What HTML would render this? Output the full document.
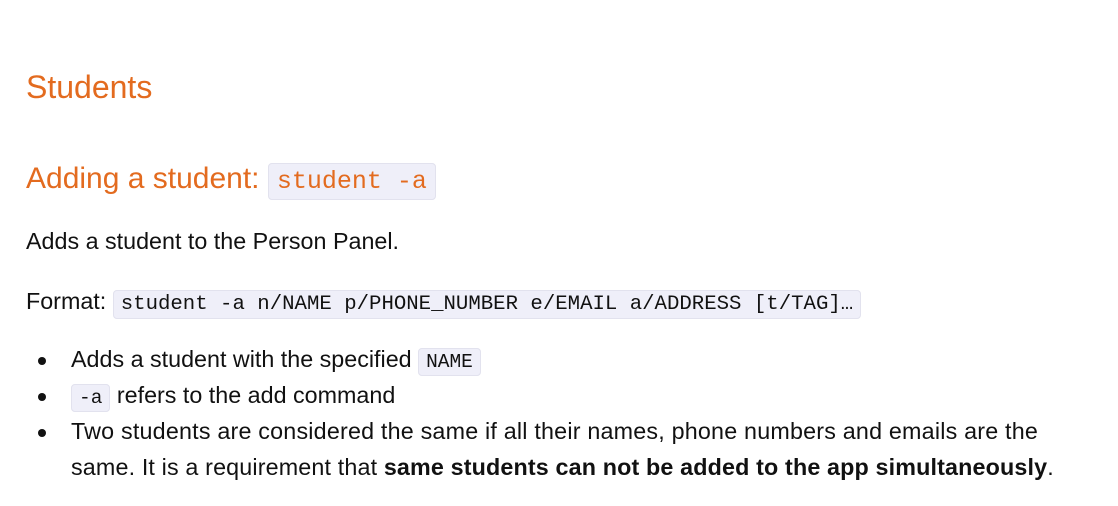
<!DOCTYPE html>
<html><head><meta charset="utf-8"><style>
body{margin:0;width:1118px;height:506px;background:#fff;font-family:"Liberation Sans",sans-serif;color:#111;position:relative;overflow:hidden}
.l{position:absolute;white-space:nowrap;left:26px}
.o{color:#e36b1f}
code{font-family:"Liberation Mono",monospace;background:#efeff9;border:1px solid #e2e2ee;border-radius:4px;padding:2px 7px;color:#111}
.b{position:absolute;left:38px;width:8px;height:8px;border-radius:50%;background:#111}
.t{font-size:23.3px}
</style></head><body>
<div class="l o" style="top:69px;font-size:32px">Students</div>
<div class="l o" style="top:162px;font-size:30px">Adding a student: <code style="color:#e36b1f;font-size:25px;padding:3px 8px">student -a</code></div>
<div class="l t" style="top:228px">Adds a student to the Person Panel.</div>
<div class="l t" style="top:288px">Format: <code style="font-size:20.7px">student -a n/NAME p/PHONE_NUMBER e/EMAIL a/ADDRESS [t/TAG]…</code></div>
<div class="b" style="top:357px"></div>
<div class="l t" style="left:71px;top:346px">Adds a student with the specified <code style="font-size:19.5px">NAME</code></div>
<div class="b" style="top:393px"></div>
<div class="l t" style="left:71px;top:382px"><code style="font-size:19.5px">-a</code> refers to the add command</div>
<div class="b" style="top:429px"></div>
<div class="l t" style="left:71px;top:418px;letter-spacing:0.2px">Two students are considered the same if all their names, phone numbers and emails are the</div>
<div class="l t" style="left:71px;top:454px;letter-spacing:0.15px">same. It is a requirement that <b>same students can not be added to the app simultaneously</b>.</div>
</body></html>
